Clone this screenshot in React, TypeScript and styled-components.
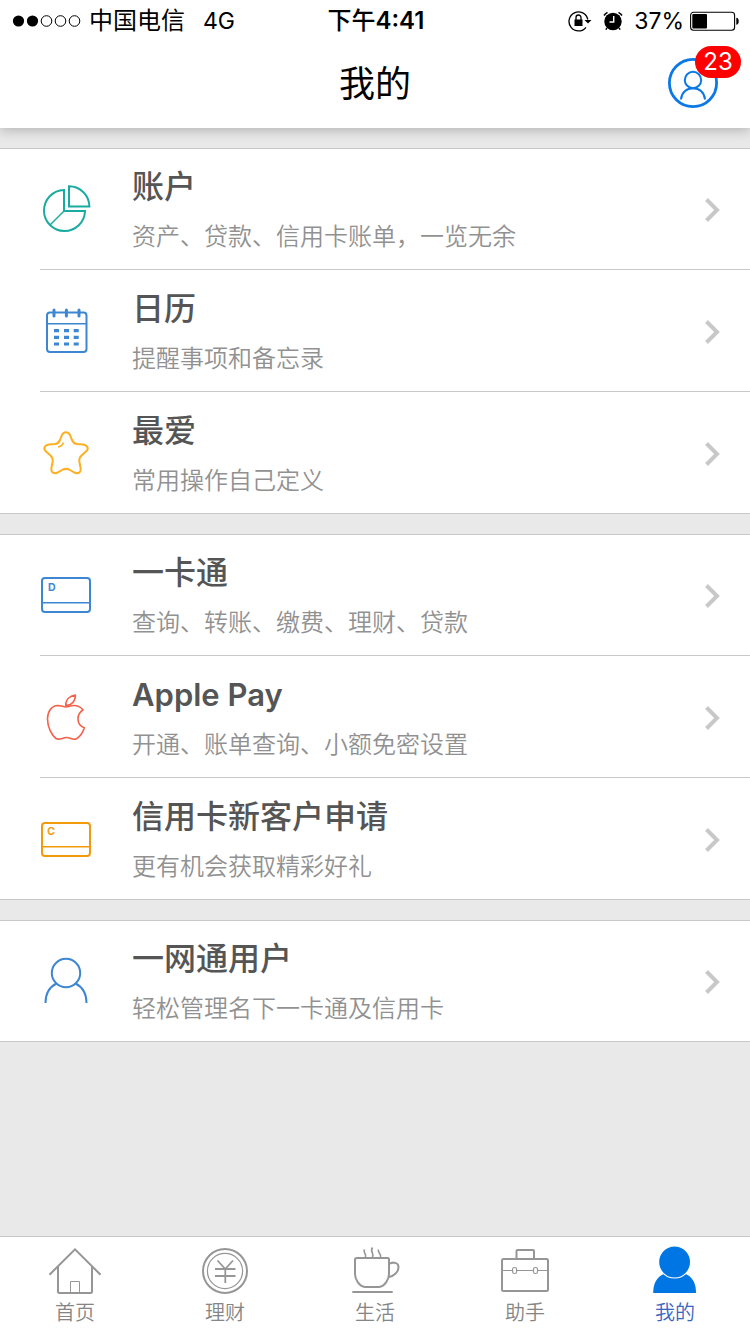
import React from 'react';
import styled, { createGlobalStyle } from 'styled-components';

const GlobalStyle = createGlobalStyle`
  * { box-sizing: border-box; }
  body {
    margin: 0;
    background: #e9e9e9;
    font-family: Inter, "Noto Sans CJK SC", sans-serif;
  }
  ul { list-style: none; margin: 0; padding: 0; }
  a { color: inherit; text-decoration: none; }
  svg { display: block; flex: none; }
`;

const Page = styled.div`
  display: flex;
  flex-direction: column;
  min-height: 100vh;
`;

const Header = styled.header`
  position: sticky;
  top: 0;
  z-index: 2;
  background: #fff;
  box-shadow: 0 2px 12px rgba(0, 0, 0, 0.25);
`;

const StatusBar = styled.div`
  display: grid;
  grid-template-columns: 1fr auto 1fr;
  align-items: center;
  height: 40px;
  padding: 0 10px 0 12px;
  font-size: 24px;
  line-height: 42px;
  color: #000;
`;

const StatusSide = styled.div<{ $end?: boolean }>`
  display: flex;
  align-items: center;
  justify-content: ${(p) => (p.$end ? 'flex-end' : 'flex-start')};
  gap: ${(p) => (p.$end ? '6px' : '8px')};
`;

const Network = styled.span`
  margin-left: 10px;
  font-size: 23px;
`;

const Level = styled.span`
  margin-left: 4px;
  font-size: 23px;
`;

const Clock = styled.time`
  font-weight: 600;
`;

const ClockPrefix = styled.span`
  font-weight: 500;
`;

const NavBar = styled.div`
  display: grid;
  grid-template-columns: 1fr auto 1fr;
  align-items: center;
  height: 88px;
  padding: 0 32px 2px;
`;

const NavTitle = styled.h1`
  grid-column: 2;
  margin: 0;
  padding-top: 2px;
  font-size: 36px;
  font-weight: 400;
  line-height: 48px;
  color: #000;
`;

const ProfileButton = styled.button`
  position: relative;
  justify-self: end;
  padding: 0;
  border: 0;
  background: none;
  cursor: pointer;
`;

const Badge = styled.span`
  position: absolute;
  top: -12px;
  right: -23px;
  width: 46px;
  border-radius: 16px;
  background: #ff0000;
  color: #fff;
  font-family: Inter, sans-serif;
  font-size: 24px;
  line-height: 32px;
  text-align: center;
`;

const Content = styled.main`
  flex: 1;
  display: flex;
  flex-direction: column;
  gap: 20px;
  padding: 20px 0;
`;

const Group = styled.ul`
  background: #fff;
  box-shadow: inset 0 1px #c8c8ca, inset 0 -1px #c8c8ca;
`;

const Item = styled.li`
  margin-left: 40px;
  border-bottom: 1px solid #c8c8c8;
  &:last-child { border-bottom-color: transparent; }
`;

const RowLink = styled.a`
  display: flex;
  align-items: center;
  height: 121px;
  padding-right: 28px;
`;

const IconSlot = styled.span`
  width: 93px;
  flex: none;
  margin-left: -2px;
  margin-right: 1px;
`;

const RowText = styled.span`
  flex: 1;
  min-width: 0;
  display: flex;
  flex-direction: column;
  gap: 12px;
  padding-top: 4px;
`;

const RowTitle = styled.span`
  font-size: 32px;
  font-weight: 500;
  line-height: 40px;
  color: #555;
`;

const Latin = styled.span`
  font-size: 31px;
  font-weight: 600;
`;

const RowNote = styled.span`
  font-size: 24px;
  font-weight: 350;
  line-height: 36px;
  color: #919191;
`;

const TabBar = styled.nav`
  position: sticky;
  bottom: 0;
  display: flex;
  background: #fff;
  border-top: 1px solid #c8c8c8;
`;

const Tab = styled.a<{ $active?: boolean }>`
  flex: 1;
  display: flex;
  flex-direction: column;
  align-items: center;
  gap: 6px;
  padding: 8px 0 9px;
  font-size: 20px;
  font-weight: 350;
  line-height: 24px;
  && { color: ${(p) => (p.$active ? '#3a66c0' : '#858585')}; }
`;

const RowSvg = ({ color, children }: { color: string; children: React.ReactNode }) => (
  <svg width="56" height="56" viewBox="0 0 56 56" fill="none" stroke={color} strokeWidth="2" aria-hidden="true">
    {children}
  </svg>
);

const PieIcon = () => (
  <RowSvg color="#1aaba0">
    <path d="M26 9A20.5 20.5 0 1 0 47 30H26Z" />
    <path d="M31 5.2V25.6H51.4A20.4 20.4 0 0 0 31 5.2Z" />
    <path d="M26 30L12 44" strokeWidth="1.5" />
  </RowSvg>
);

const CalendarIcon = () => (
  <RowSvg color="#3d87d2">
    <rect x="9" y="9.5" width="39.5" height="39.5" rx="3" />
    <path d="M9 20.7H48" strokeWidth="1.6" />
    <path d="M16 7V13M28.4 7V13M41 7V13" strokeWidth="3" strokeLinecap="round" />
    <path d="M16 27.6h5m5 0h5m4.7 0h5M16 34.3h5m5 0h5m4.7 0h5M16 41h5m5 0h5m4.7 0h5" strokeWidth="3.2" />
  </RowSvg>
);

const StarIcon = () => (
  <RowSvg color="#fdb022">
    <path d="M28 7.2C30 7.2 31 8.2 32 10L34 15C35.3 18 36.5 18.7 39 19L45 19.5C50 20.2 51 24 48 26.600L43.5 30.5C41.5 32.5 41 34 41.3 36.5L42.6 43C43.2 47.6 40 49.3 36.5 47.5L32 45C29 43.3 27 43.3 24 45L19.5 47.5C16 49.3 12.8 47.6 13.4 43L14.7 36.5C15 34 14.5 32.5 12.5 30.5L8 26.6C5 24 6 20.2 11 19.5L17 19C19.5 18.7 20.7 18 22 15L24 10C25 8.2 26 7.2 28 7.2Z" />
    <path d="M20 22C22.5 21.8 24.5 20.3 25.5 17.5" strokeWidth="1.6" />
  </RowSvg>
);

const CardIcon = ({ color, letter, y }: { color: string; letter: string; y: number }) => (
  <RowSvg color={color}>
    <rect x="4" y={y} width="48" height={45 - y} rx="3" />
    <path d="M4 35.8H52" strokeWidth="1.6" />
    <text x={letter === 'D' ? 10 : 9.2} y="24" fontFamily="Inter, sans-serif" fontSize="10.500" fontWeight="600" fill={color} stroke={color} strokeWidth="0.200">
      {letter}
    </text>
  </RowSvg>
);

const AppleIcon = () => (
  <RowSvg color="#f4614a">
    <g strokeWidth="1.600" strokeLinejoin="round">
      <path d="M37.3 6C31.5 7 27.5 11 27.7 16.6C33.5 16.3 37.7 12 37.3 6Z" />
      <path d="M28 18C25.5 18 23 16.5 19.7 16.5C13.5 16.7 9.5 22.5 9.5 30C9.5 38.5 14 46.5 18 49.5C21.5 51.5 24.5 48.5 28.5 48.5C32.5 48.5 35 51.5 38.5 49.8C41.5 48 45 43 46.3 38.8C42.5 37.3 40 34 40 29.7C40 26 41.8 23 45 21C42.8 18 39.5 16.5 36 16.5C32.8 16.5 30.5 18 28 18Z" />
    </g>
  </RowSvg>
);

const UserIcon = () => (
  <RowSvg color="#3d87d2">
    <circle cx="28" cy="20" r="14.2" />
    <path d="M7.5 50C7.5 41 11.5 34 18.5 30.5M48.5 50C48.5 41 44.5 34 37.5 30.5" />
  </RowSvg>
);

const Chevron = () => (
  <svg width="20" height="30" viewBox="0 0 20 30" fill="none" stroke="#c8c8c8" strokeWidth="4" aria-hidden="true">
    <path d="M4.500 5.500L15 16L4.500 26.500" />
  </svg>
);

const TabSvg = ({ children }: { children: React.ReactNode }) => (
  <svg width="60" height="50" viewBox="0 0 60 50" fill="none" stroke="#969696" strokeWidth="2" aria-hidden="true">
    {children}
  </svg>
);

const HomeIcon = () => (
  <TabSvg>
    <path d="M4.5 29.7L30 4.3L55.5 29.7" />
    <path d="M13 22V46.5Q13 48 14.5 48H45.5Q47 48 47 46.5V22" />
    <path d="M25.5 48V36.5H34.5V48" strokeWidth="1" />
  </TabSvg>
);

const CoinIcon = () => (
  <TabSvg>
    <circle cx="30" cy="26" r="22" />
    <circle cx="30" cy="26" r="17.6" strokeWidth="1.2" />
    <path d="M22.5 15.5L30.3 24L38 15.5M20 24H40.5M20 31H40.5M30.3 24V38" strokeWidth="1.8" />
  </TabSvg>
);

const CupIcon = () => (
  <TabSvg>
    <path d="M12 13H42.5Q44 13 44 14.5V29C44 34 40 41.5 34 42H20C14 41.5 10 34 10 29V14.5Q10 13 12 13Z" />
    <path d="M44 19C48 16.5 53.5 17.5 53.5 22C53.5 27 49 31 44 32" />
    <path d="M7.3 47H47.7" />
    <path d="M19.5 4.5C17.5 8 22 8.500 20.5 12.500M27.5 2.5C24.5 6.500 29.5 8 27.5 12.5M33.5 4.5C32 8 37 8.5 35.5 12.5" strokeWidth="1.7" />
  </TabSvg>
);

const CaseIcon = () => (
  <TabSvg>
    <rect x="7" y="14" width="46" height="32" rx="1.5" />
    <path d="M21.5 14V6Q21.5 5 22.5 5H38Q39 5 39 6V14" />
    <path d="M7 25.5H17.5M21.5 25.5H38.5M42.5 25.5H53" strokeWidth="1.2" />
    <rect x="17.6" y="22.5" width="4" height="6" rx="1.8" strokeWidth="1.2" />
    <rect x="38.5" y="22.5" width="4" height="6" rx="1.8" strokeWidth="1.2" />
  </TabSvg>
);

const MeIcon = () => (
  <TabSvg>
    <g stroke="none" fill="#0076e4">
      <path d="M8.2 48C8.2 37 13 27 29.7 27C46.5 27 51 37 51 48Z" />
      <circle cx="29.6" cy="17" r="16" stroke="#fff" strokeWidth="1.2" />
    </g>
  </TabSvg>
);

const SignalDots = () => (
  <svg width="69" height="12" viewBox="0 0 69 12" fill="none" stroke="#000" role="img" aria-label="信号">
    <circle cx="6.5" cy="6" r="5.6" fill="#000" stroke="none" />
    <circle cx="20.5" cy="6" r="5.6" fill="#000" stroke="none" />
    <circle cx="34.5" cy="6" r="5.3" />
    <circle cx="48.5" cy="6" r="5.3" />
    <circle cx="62.5" cy="6" r="5.3" />
  </svg>
);

const LockIcon = () => (
  <svg width="24" height="22" viewBox="0 0 24 22" fill="none" stroke="#000" aria-hidden="true">
    <path d="M18 17.300A9.500 9.500 0 1 1 19.800 9.500" strokeWidth="1.300" />
    <path d="M16.500 10H23.500L20 13.500Z" fill="#000" stroke="none" />
    <rect x="6.500" y="9.500" width="8" height="6.500" fill="#000" stroke="none" />
    <path d="M8 10V7.500A2.500 2.500 0 0 1 13 7.500V10" strokeWidth="1.300" />
  </svg>
);

const AlarmIcon = () => (
  <svg width="22" height="22" viewBox="0 0 22 22" aria-hidden="true">
    <circle cx="11" cy="11.500" r="8.700" />
    <path d="M2 5.500A10 10 0 0 1 5.500 2.300M16.500 2.300A10 10 0 0 1 20 5.500M5 18L3.800 19.600M17 18L18.200 19.600" stroke="#000" strokeWidth="1.500" fill="none" />
    <path d="M11.700 6V12H7.500" stroke="#fff" strokeWidth="1.400" fill="none" />
  </svg>
);

const BatteryIcon = () => (
  <svg width="50" height="20" viewBox="0 0 50 20" aria-hidden="true">
    <rect x="0.600" y="1.200" width="44" height="18" rx="3" fill="none" stroke="#000" strokeWidth="1.100" />
    <rect x="2.300" y="3" width="14.700" height="14.500" rx="1" />
    <path d="M46.300 6.800C49.500 6.800 49.500 13.800 46.300 13.800Z" />
  </svg>
);

const ProfileIcon = () => (
  <svg width="50" height="50" viewBox="0 0 50 50" fill="none" stroke="#0a78e6" aria-hidden="true">
    <circle cx="25" cy="25" r="23.6" strokeWidth="2.8" />
    <circle cx="25" cy="22" r="8.2" strokeWidth="2" />
    <path d="M13 41.5C13.5 34.5 18.5 30.3 25 30.3C31.5 30.3 36.5 34.5 37 41.5" strokeWidth="2" />
  </svg>
);

interface Entry {
  title: string;
  note: string;
  icon: React.ReactNode;
  latin?: boolean;
}

const groups: Entry[][] = [
  [
    { title: '账户', note: '资产、贷款、信用卡账单，一览无余', icon: <PieIcon /> },
    { title: '日历', note: '提醒事项和备忘录', icon: <CalendarIcon /> },
    { title: '最爱', note: '常用操作自己定义', icon: <StarIcon /> },
  ],
  [
    { title: '一卡通', note: '查询、转账、缴费、理财、贷款', icon: <CardIcon color="#3d87d2" letter="D" y={11} /> },
    { title: 'Apple Pay', note: '开通、账单查询、小额免密设置', icon: <AppleIcon />, latin: true },
    { title: '信用卡新客户申请', note: '更有机会获取精彩好礼', icon: <CardIcon color="#f39a0c" letter="C" y={12} /> },
  ],
  [{ title: '一网通用户', note: '轻松管理名下一卡通及信用卡', icon: <UserIcon /> }],
];

const tabs = [
  { label: '首页', icon: <HomeIcon /> },
  { label: '理财', icon: <CoinIcon /> },
  { label: '生活', icon: <CupIcon /> },
  { label: '助手', icon: <CaseIcon /> },
  { label: '我的', icon: <MeIcon />, active: true },
];

export default function App() {
  return (
    <Page lang="zh-CN">
      <GlobalStyle />
      <Header>
        <StatusBar>
          <StatusSide>
            <SignalDots />
            <span>中国电信</span>
            <Network>4G</Network>
          </StatusSide>
          <Clock>
            <ClockPrefix>下午</ClockPrefix>4:41
          </Clock>
          <StatusSide $end>
            <LockIcon />
            <Level>
              <AlarmIcon />
            </Level>
            <Level>37%</Level>
            <BatteryIcon />
          </StatusSide>
        </StatusBar>
        <NavBar>
          <NavTitle>我的</NavTitle>
          <ProfileButton type="button" aria-label="个人中心，23 条消息">
            <ProfileIcon />
            <Badge>23</Badge>
          </ProfileButton>
        </NavBar>
      </Header>
      <Content>
        {groups.map((entries) => (
          <Group key={entries[0].title}>
            {entries.map((e) => (
              <Item key={e.title}>
                <RowLink href="#">
                  <IconSlot>{e.icon}</IconSlot>
                  <RowText>
                    <RowTitle>{e.latin ? <Latin>{e.title}</Latin> : e.title}</RowTitle>
                    <RowNote>{e.note}</RowNote>
                  </RowText>
                  <Chevron />
                </RowLink>
              </Item>
            ))}
          </Group>
        ))}
      </Content>
      <TabBar>
        {tabs.map((t) => (
          <Tab key={t.label} href="#" $active={t.active} aria-current={t.active ? 'page' : undefined}>
            {t.icon}
            {t.label}
          </Tab>
        ))}
      </TabBar>
    </Page>
  );
}
